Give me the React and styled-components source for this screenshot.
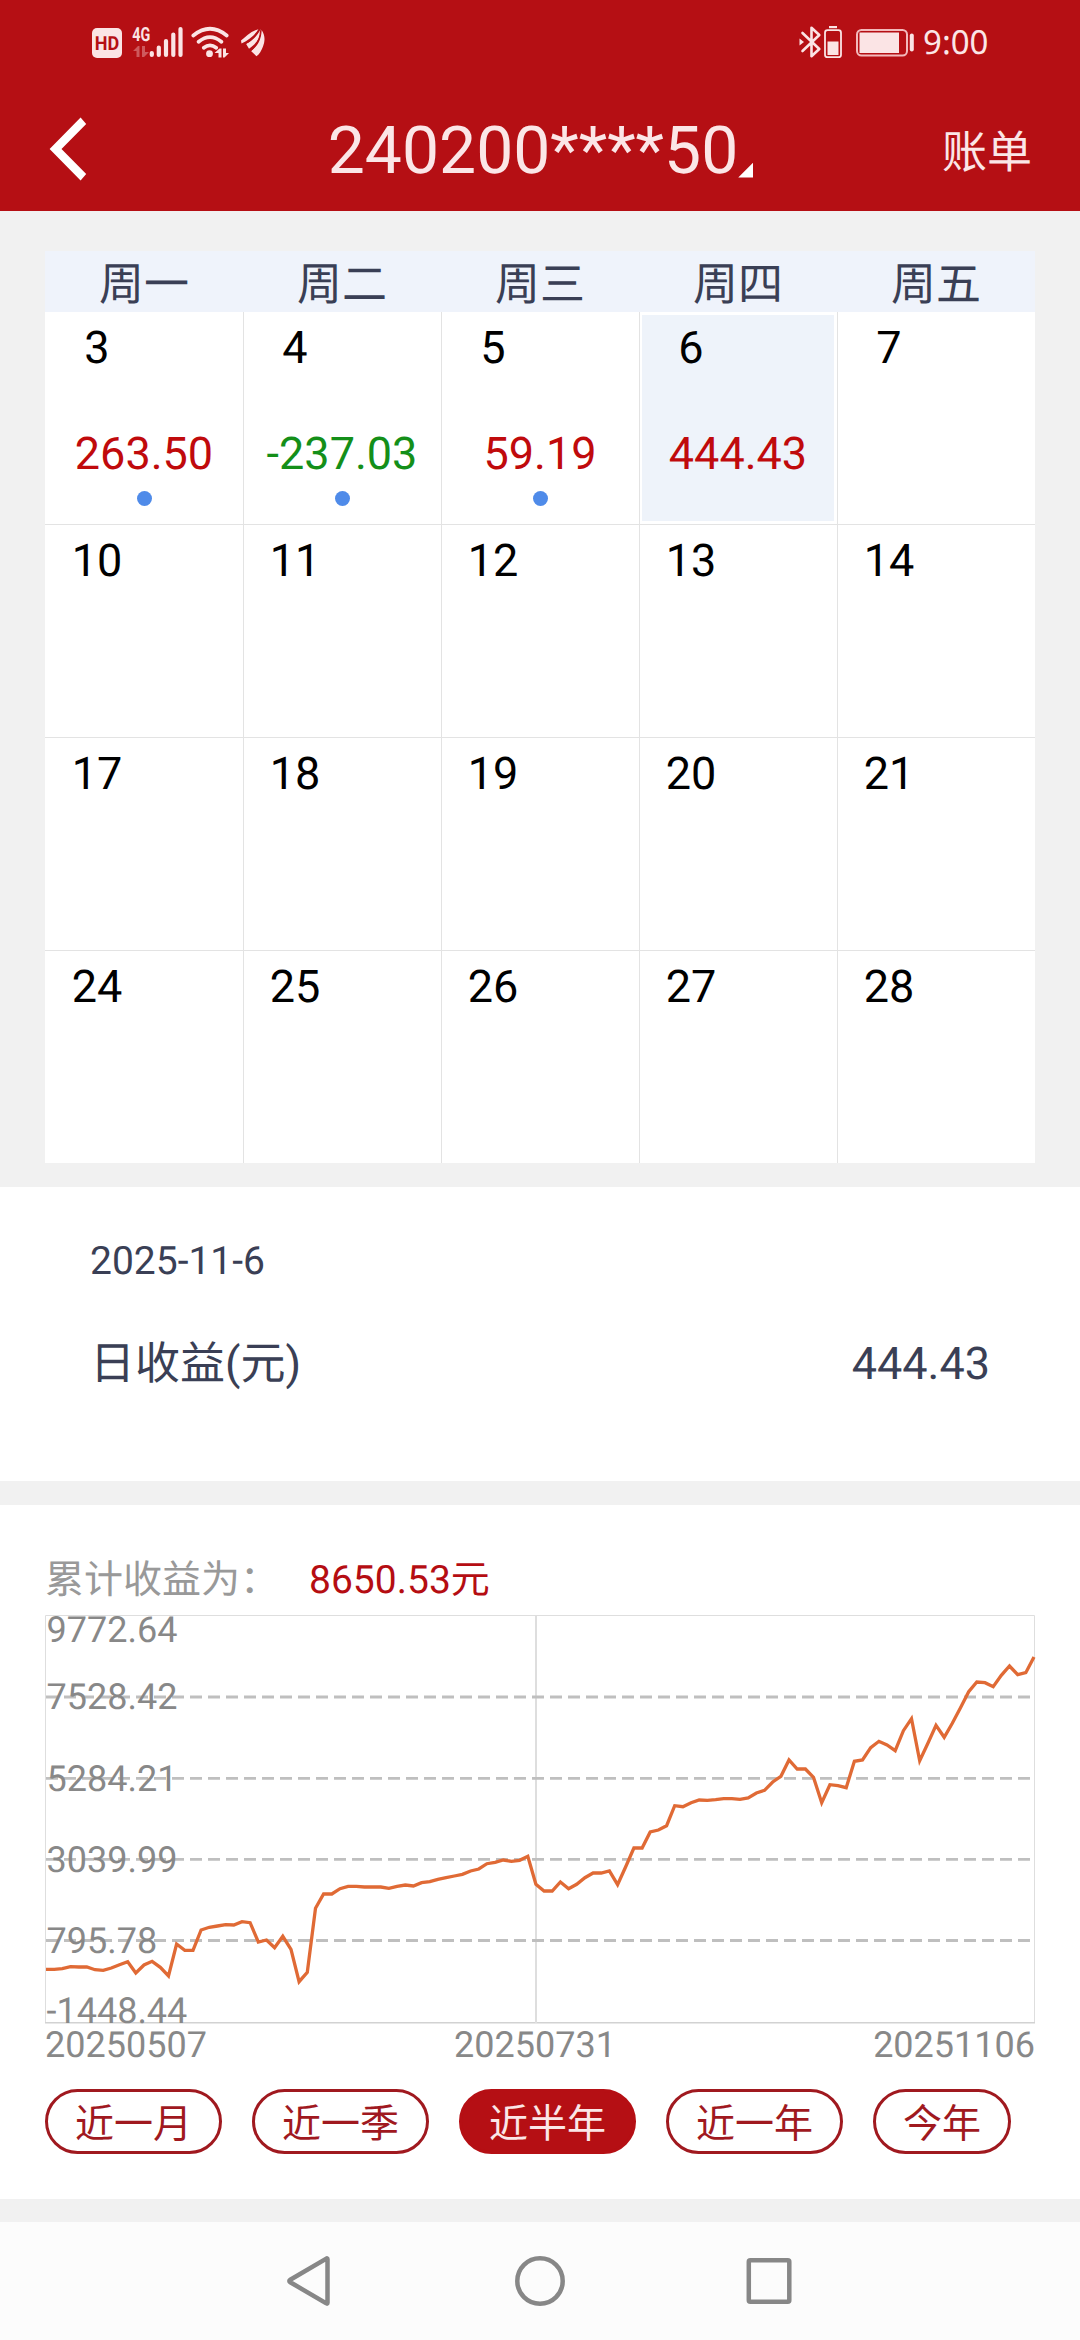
import { useState } from "react";
import styled, { createGlobalStyle } from "styled-components";

const weekdays = ["周一", "周二", "周三", "周四", "周五"];

const weeks = [
  [
    { day: 3, profit: "263.50", dot: true },
    { day: 4, profit: "-237.03", dot: true },
    { day: 5, profit: "59.19", dot: true },
    { day: 6, profit: "444.43" },
    { day: 7 },
  ],
  [{ day: 10 }, { day: 11 }, { day: 12 }, { day: 13 }, { day: 14 }],
  [{ day: 17 }, { day: 18 }, { day: 19 }, { day: 20 }, { day: 21 }],
  [{ day: 24 }, { day: 25 }, { day: 26 }, { day: 27 }, { day: 28 }],
];

const ranges = ["近一月", "近一季", "近半年", "近一年", "今年"];

const axisLabels = [
  { text: "9772.64", y: 26.7 },
  { text: "7528.42", y: 94.3 },
  { text: "5284.21", y: 175.7 },
  { text: "3039.99", y: 256.7 },
  { text: "795.78", y: 338 },
  { text: "-1448.44", y: 407.7 },
];

const gridLines = [82, 163.3, 244.3, 325.5];

// one point per trading day, y inside the chart
const curve = [
  354.3, 354.3, 353.7, 351.7, 352, 352, 354.7, 355.3, 353, 349.7, 346.7, 358,
  350, 346.3, 352.3, 361, 329, 335.3, 335.3, 315, 312.3, 311, 309.7, 310, 306.7,
  307.7, 327, 325, 332.7, 321.3, 334.3, 366.7, 357.3, 293.3, 279, 279, 273.7,
  271.3, 271.3, 272, 272, 272, 273.3, 271.3, 270, 271, 267.7, 266.7, 264.3,
  262.7, 261, 259.3, 256, 254, 248.7, 247.3, 245, 246.3, 245.3, 241.3, 269.3,
  276, 276, 267, 273.7, 269.3, 262.7, 258, 258, 256, 269.7, 251.7, 233, 233,
  217, 215, 210.7, 190.7, 191.7, 187.7, 185, 185.3, 184.7, 183.7, 183.7, 184.3,
  183, 178, 175.3, 167, 161.3, 145, 154, 154, 162.3, 187.7, 169.7, 170.7, 172.7,
  146.3, 145, 132.7, 126.3, 130, 135.7, 115.7, 103.7, 145.7, 128.3, 110.3,
  122.3, 108.3, 92.7, 76.7, 67, 67.7, 71.7, 60.3, 51, 59.7, 57.7, 42,
];
const step = 988 / (curve.length - 1);
const points = curve.map((y, i) => `${(1 + i * step).toFixed(1)},${y}`).join(" ");

const StatusIcons = () => (
  <svg width="180" height="40" viewBox="90 22 180 40" fill="#fbe4e5">
    <rect x="92" y="28" width="30" height="30" rx="5" />
    <text x="94.8" y="50.3" fontSize="19.500" fontWeight="700" fill="#b50f14" textLength="24.5" lengthAdjust="spacingAndGlyphs">
      HD
    </text>
    <text x="132.3" y="40.7" fontSize="19.500" fontWeight="700" textLength="18" lengthAdjust="spacingAndGlyphs">
      4G
    </text>
    <path opacity="0.35" d="M133 51l5-5h1.500v11h-3v-6zM142 46h3v6h4l-5 5h-2z" />
    <g stroke="#fbe4e5" strokeWidth="4.200" strokeLinecap="round">
      <path d="M151.800 53v2M158.800 47.500v7.500M166 41v14M173.300 34.500v20.500M180.500 29v26" />
    </g>
    <g fill="none" stroke="#fbe4e5" strokeWidth="3.700" strokeLinecap="round">
      <path d="M193.300 35.500q16.700-13.500 33.400 0M198.600 41.800q11.400-9.400 22.800 0M203.800 47.800q6.200-5 12.400 0" />
    </g>
    <circle cx="209.500" cy="53.700" r="3.400" />
    <path d="M214.500 53l5-4.500h2v9h-3v-4.500zM223 48.500h3v4.500h3l-4.500 4.500h-1.500z" />
    <path d="M241 40.500c5-4 10-9.500 17.500-11.300-3 5-9 10.500-17 14.300z" />
    <path d="M246 43.800c6-3 11.500-8 14.500-14.500 1 7-4 14.500-11.500 19.500z" />
    <path d="M251 51c6-4.500 10.500-11 10.600-21 3.600 5 3.600 11 1.400 16.500-1.700 4.500-3.500 7.500-6.500 9.800z" />
    <path d="M244.500 44.200c6-3 11.500-8 14.500-14.500M250 51.200c6-5 10.300-11 10.600-21" fill="none" stroke="#b50f14" strokeWidth="1.200" />
  </svg>
);

const BatteryIcons = () => (
  <svg width="118" height="40" viewBox="798 22 118 40" fill="#fbe4e5">
    <path d="M799.500 38.500l4.500 3.500-4.500 3.500z" />
    <path d="M802.500 33l16.800 16-7.800 7.200v-28.400l7.800 7.200-16.800 16" fill="none" stroke="#fbe4e5" strokeWidth="2.600" strokeLinejoin="round" strokeLinecap="round" />
    <rect x="829" y="26" width="8" height="2.200" />
    <rect x="825" y="30.200" width="16" height="27" rx="2.500" fill="none" stroke="#fbe4e5" strokeWidth="1.800" />
    <rect x="827.500" y="41.500" width="11" height="13.500" />
    <rect x="857" y="30" width="50" height="25.500" rx="4.500" fill="none" stroke="#f3b9bb" strokeWidth="2" />
    <rect x="859.500" y="32.500" width="39.500" height="20.500" />
    <rect x="909.800" y="33.500" width="4" height="18" rx="2" />
  </svg>
);

export default function App() {
  const [selected, setSelected] = useState(6);
  const [range, setRange] = useState("近半年");

  return (
    <Page>
      <GlobalStyle />
      <Header>
        <StatusBar>
          <StatusIcons />
          <StatusRight>
            <BatteryIcons />
            <Clock>9:00</Clock>
          </StatusRight>
        </StatusBar>
        <TitleBar>
          <BackButton aria-label="返回">
            <svg width="38" height="64" viewBox="49 116 38 64" fill="#fff">
              <path d="M80.600 116.500l5.600 6.500-24.700 25 24.700 25-5.600 6.500-31-31.500z" />
            </svg>
          </BackButton>
          <Title>
            240200****50
            <Corner />
          </Title>
          <BillLink>账单</BillLink>
        </TitleBar>
      </Header>

      <Calendar>
        <WeekHeader>
          {weekdays.map((name) => (
            <span key={name}>{name}</span>
          ))}
        </WeekHeader>
        {weeks.map((week, i) => (
          <Week key={i}>
            {week.map(({ day, profit, dot }) => (
              <DayCell key={day} onClick={() => setSelected(day)}>
                <DayInner $active={day === selected}>
                  <DayNumber>{day}</DayNumber>
                  {profit && <Profit $loss={profit[0] === "-"}>{profit}</Profit>}
                  {dot && <Dot />}
                </DayInner>
              </DayCell>
            ))}
          </Week>
        ))}
      </Calendar>

      <Detail>
        <DetailDate>2025-11-6</DetailDate>
        <DetailRow>
          <span>日收益(元)</span>
          <span>444.43</span>
        </DetailRow>
      </Detail>

      <ChartPanel>
        <Summary>
          <span>累计收益为：</span>
          <Total>8650.53元</Total>
        </Summary>
        <Chart width="990" height="409" viewBox="0 0 990 409">
          <path d="M0.500 408V0.500h989V408" fill="none" stroke="#dedede" />
          <path d="M0 407.700h990" stroke="#d2d2d2" strokeWidth="1.500" />
          <path d="M491 0v408" stroke="#dedede" strokeWidth="2" />
          {gridLines.map((y) => (
            <path key={y} d={`M1 ${y}h985`} stroke="#bfbfbf" strokeWidth="2.800" strokeDasharray="12 6" />
          ))}
          {axisLabels.map(({ text, y }) => (
            <text key={text} x="1.500" y={y} fontSize="36" fill="#888">
              {text}
            </text>
          ))}
          <polyline points={points} fill="none" stroke="#e06a35" strokeWidth="3.300" />
        </Chart>
        <ChartDates>
          <span>20250507</span>
          <span>20250731</span>
          <span>20251106</span>
        </ChartDates>
        <Ranges>
          {ranges.map((name) => (
            <RangeButton key={name} $active={name === range} onClick={() => setRange(name)}>
              {name}
            </RangeButton>
          ))}
        </Ranges>
      </ChartPanel>

      <NavBar>
        <svg width="46" height="54" viewBox="285 2254 46 54">
          <path d="M327.500 2259.300v43.400q0 1.500-1.200.600l-36-21q-2-1.300 0-2.600l36-21q1.200-.9 1.200.6z" />
        </svg>
        <svg width="58" height="54" viewBox="509 2254 58 54">
          <circle cx="540" cy="2281" r="22.700" />
        </svg>
        <svg width="50" height="54" viewBox="744 2254 50 54">
          <rect x="748.800" y="2260.300" width="40.500" height="41.500" rx="1.500" />
        </svg>
      </NavBar>
    </Page>
  );
}

const GlobalStyle = createGlobalStyle`
  body {
    margin: 0;
    background: #f1f1f1;
  }
  button {
    font-family: inherit;
    border: 0;
    padding: 0;
    background: none;
  }
  svg {
    display: block;
  }
`;

const Page = styled.div`
  width: 1080px;
  height: 2340px;
  overflow: hidden;
  background: #f1f1f1;
  font-family: Roboto, "Noto Sans CJK SC", sans-serif;
  text-rendering: geometricPrecision;
  display: flex;
  flex-direction: column;
`;

const Header = styled.header`
  height: 211px;
  background: #b50f14;
  color: #fbe6e7;
`;

const StatusBar = styled.div`
  height: 86px;
  box-sizing: border-box;
  padding: 0 91px 2px 90px;
  display: flex;
  align-items: center;
  justify-content: space-between;
`;

const StatusRight = styled.div`
  display: flex;
  align-items: center;
  gap: 7px;
`;

const Clock = styled.span`
  width: 66px;
  font-family: "Noto Sans", sans-serif;
  font-size: 33px;
  line-height: 40px;
  white-space: nowrap;
`;

const TitleBar = styled.div`
  height: 125px;
  box-sizing: border-box;
  padding: 0 48px 0 49px;
  display: grid;
  grid-template-columns: 150px 1fr 150px;
  align-items: center;
`;

const BackButton = styled.button`
  cursor: pointer;
  justify-self: start;
`;

const Title = styled.h1`
  margin: 0;
  padding-top: 6px;
  font-size: 66px;
  font-weight: 400;
  line-height: 78px;
  display: flex;
  justify-content: center;
  align-items: flex-end;
`;

const Corner = styled.i`
  width: 15px;
  height: 15px;
  margin-bottom: 13px;
  background: #fff;
  clip-path: polygon(100% 0, 100% 100%, 0 100%);
`;

const BillLink = styled.a`
  justify-self: end;
  font-size: 45px;
  cursor: pointer;
`;

const Calendar = styled.section`
  margin: 40px 45px 24px;
  background: #fff;
`;

const WeekHeader = styled.div`
  height: 61px;
  display: grid;
  grid-template-columns: repeat(5, 198px);
  background: #eff3fb;
  color: #3a3f55;
  font-size: 45px;
  line-height: 67px;
  text-align: center;
`;

const Week = styled.div`
  display: grid;
  grid-template-columns: repeat(5, 198px);
  grid-auto-rows: 212px;
  & + & {
    border-top: 1px solid #e3e3e3;
  }
`;

const DayCell = styled.div`
  display: flex;
  padding: 3px 3px 3px 2px;
  border-left: 1px solid #e3e3e3;
  cursor: pointer;
  &:first-child {
    border-left-color: #fff;
  }
`;

const DayInner = styled.div`
  flex: 1;
  display: flex;
  flex-direction: column;
  align-items: center;
  padding-top: 6px;
  background: ${(props) => (props.$active ? "#eef3fa" : "transparent")};
`;

const DayNumber = styled.span`
  align-self: flex-start;
  width: 98px;
  text-align: center;
  font-size: 45px;
  line-height: 53px;
  color: #000;
`;

const Profit = styled.span`
  margin-top: 53px;
  font-size: 45px;
  line-height: 53px;
  color: ${(props) => (props.$loss ? "#148f19" : "#c00a0c")};
`;

const Dot = styled.i`
  width: 15px;
  height: 15px;
  margin-top: 11px;
  border-radius: 50%;
  background: #4f8be9;
`;

const Detail = styled.section`
  height: 294px;
  box-sizing: border-box;
  padding: 51px 90px 0;
  background: #fff;
  color: #3a3f55;
`;

const DetailDate = styled.div`
  font-size: 39px;
  line-height: 46px;
`;

const DetailRow = styled.div`
  margin-top: 53px;
  display: flex;
  justify-content: space-between;
  font-size: 45px;
  line-height: 53px;
`;

const ChartPanel = styled.section`
  height: 694px;
  margin: 24px 0 23px;
  box-sizing: border-box;
  padding: 50px 45px 0;
  background: #fff;
`;

const Summary = styled.div`
  height: 60px;
  display: flex;
  font-size: 39px;
  line-height: 50px;
  color: #999;
  & > :first-child {
    width: 264px;
  }
`;

const Total = styled.span`
  color: #b50d12;
`;

const Chart = styled.svg`
  overflow: visible;
`;

const ChartDates = styled.div`
  display: flex;
  justify-content: space-between;
  font-size: 36px;
  line-height: 42px;
  color: #888;
  & > :nth-child(2) {
    margin-right: 10px;
  }
`;

const Ranges = styled.div`
  margin-top: 23px;
  display: flex;
  gap: 30px;
`;

const RangeButton = styled.button`
  height: 65px;
  padding: 5px 27px 0;
  border: 3px solid ${(props) => (props.$active ? "#b50f14" : "#a0191f")};
  border-radius: 33px;
  font-size: 39px;
  line-height: 54px;
  color: ${(props) => (props.$active ? "#fbe6e7" : "#a0191f")};
  background: ${(props) => (props.$active ? "#b50f14" : "#fff")};
  cursor: pointer;
`;

const NavBar = styled.nav`
  height: 118px;
  box-sizing: border-box;
  padding: 0 286px 0 285px;
  display: flex;
  align-items: center;
  justify-content: space-between;
  background: #fcfcfc;
  svg {
    fill: none;
    stroke: #878787;
    stroke-width: 4.5px;
  }
`;
